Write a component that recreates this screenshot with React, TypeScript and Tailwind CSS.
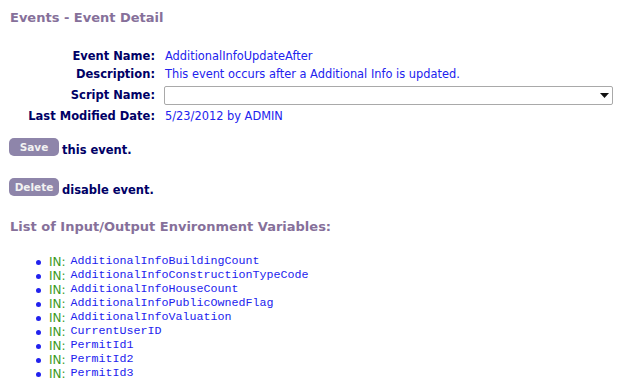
import React from "react";

const vars = [
  "AdditionalInfoBuildingCount",
  "AdditionalInfoConstructionTypeCode",
  "AdditionalInfoHouseCount",
  "AdditionalInfoPublicOwnedFlag",
  "AdditionalInfoValuation",
  "CurrentUserID",
  "PermitId1",
  "PermitId2",
  "PermitId3",
];

function Label({ children }: { children: React.ReactNode }) {
  return <div className="w-[146px] shrink-0 text-right font-bold text-[11.5px] text-[#000066]">{children}</div>;
}

function Row({ label, children }: { label: string; children: React.ReactNode }) {
  return (
    <div className="h-[18px] flex items-center">
      <Label>{label}</Label>
      <div className="ml-[10px] flex-1 text-[11.4px] text-[#2222ee]">{children}</div>
    </div>
  );
}

export default function App() {
  return (
    <div className="w-[622px] h-[390px] bg-white overflow-hidden pl-[9px] pr-[9px] pt-[10px]" style={{ fontFamily: '"DejaVu Sans", Verdana, sans-serif' }}>
      <h1 className="font-bold text-[13px] leading-[16px] text-[#86709a] pl-px">Events - Event Detail</h1>

      <div className="mt-[22px] flex flex-col">
        <Row label="Event Name:">AdditionalInfoUpdateAfter</Row>
        <Row label="Description:">This event occurs after a Additional Info is updated.</Row>
        <div className="h-[23px] flex items-center">
          <Label>Script Name:</Label>
          <div className="ml-[9px] w-[449px] h-[19px] border border-[#a9a9a9] rounded-[2px] bg-white flex items-center justify-end pr-[3px]">
            <svg width="9" height="5" viewBox="0 0 9 5"><path d="M0 0h9L4.5 5z" fill="#111" /></svg>
          </div>
        </div>
        <div className="h-[19px] flex items-center">
          <Label>Last Modified Date:</Label>
          <div className="ml-[10px] flex-1 text-[11.4px] text-[#2222ee]">5/23/2012 by ADMIN</div>
        </div>
      </div>

      <div className="mt-[12px] h-[18px] flex items-start gap-[3px]">
        <button className="w-[50px] h-[18px] rounded-[5px] bg-[#8e85aa] text-[#f2f2f2] font-bold text-[10.5px] leading-none">Save</button>
        <span className="pt-[5px] font-bold text-[11.5px] text-[#000066] leading-[14px]">this event.</span>
      </div>

      <div className="mt-[22px] h-[18px] flex items-start gap-[3px]">
        <button className="w-[50px] h-[18px] rounded-[5px] bg-[#8e85aa] text-[#f2f2f2] font-bold text-[10.5px] leading-none">Delete</button>
        <span className="pt-[5px] font-bold text-[11.5px] text-[#000066] leading-[14px]">disable event.</span>
      </div>

      <h2 className="mt-[23px] font-bold text-[13px] leading-[16px] text-[#86709a] pl-px">List of Input/Output Environment Variables:</h2>

      <ul className="mt-[20px] pl-[27px]">
        {vars.map((v) => (
          <li key={v} className="flex items-center h-[14px]">
            <span className="w-[5px] h-[5px] rounded-full bg-[#2222ee] mr-[8px]" />
            <span className="text-[12px] text-[#3c9a1e]">IN:</span>
            <span className="ml-[5px] text-[11.67px] text-[#2222ee]" style={{ fontFamily: '"Liberation Mono", "Courier New", monospace' }}>{v}</span>
          </li>
        ))}
      </ul>
    </div>
  );
}
